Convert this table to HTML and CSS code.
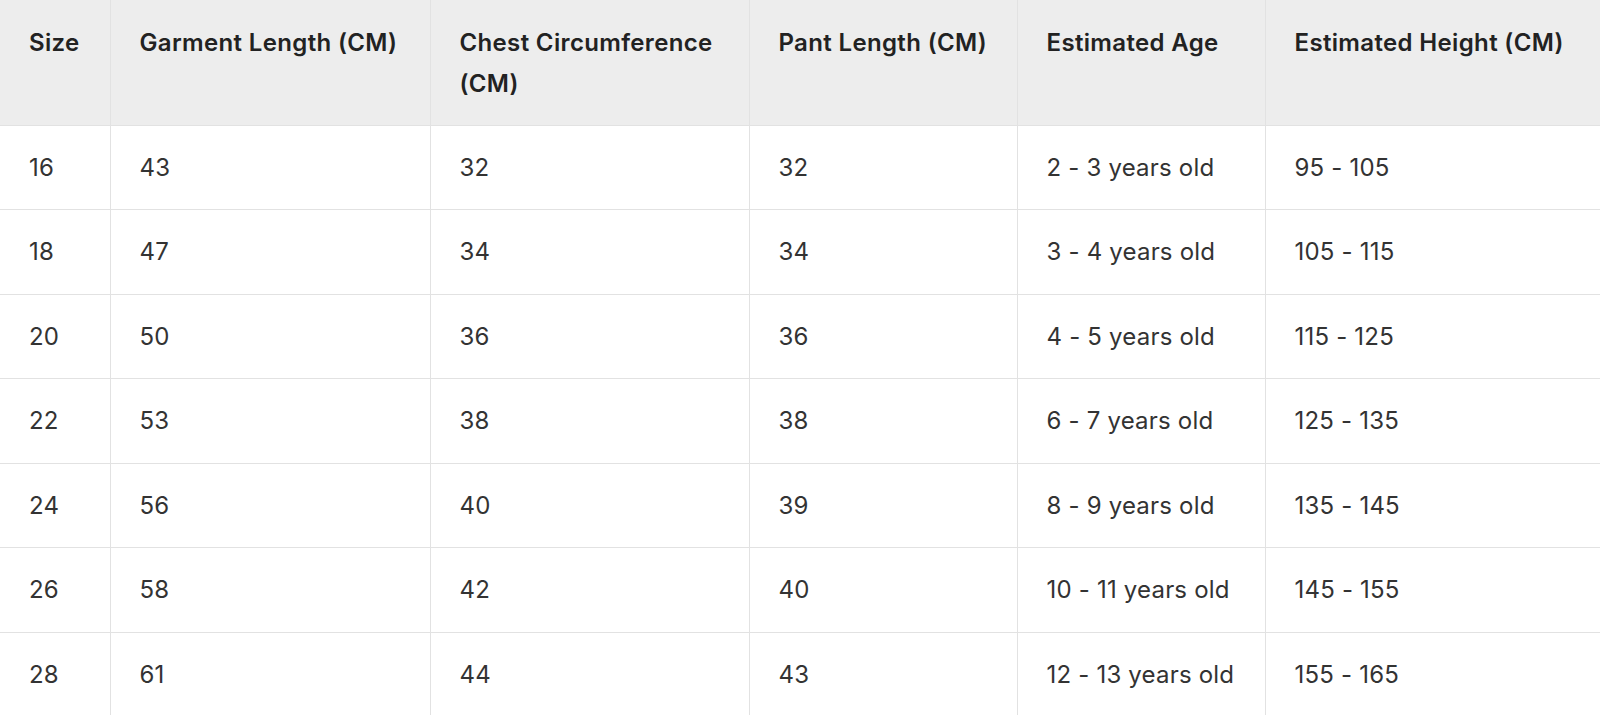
FILE: index.html
```html
<!DOCTYPE html>
<html lang="en">
<head>
<meta charset="utf-8">
<title>Size Chart</title>
<link rel="stylesheet" href="styles.css">
</head>
<body>
<table class="size-table">
  <colgroup>
    <col class="c1"><col class="c2"><col class="c3"><col class="c4"><col class="c5"><col class="c6">
  </colgroup>
  <thead>
    <tr>
      <th>Size</th>
      <th>Garment Length (CM)</th>
      <th>Chest Circumference (CM)</th>
      <th>Pant Length (CM)</th>
      <th>Estimated Age</th>
      <th>Estimated Height (CM)</th>
    </tr>
  </thead>
  <tbody>
    <tr><td>16</td><td>43</td><td>32</td><td>32</td><td>2 - 3 years old</td><td>95 - 105</td></tr>
    <tr><td>18</td><td>47</td><td>34</td><td>34</td><td>3 - 4 years old</td><td>105 - 115</td></tr>
    <tr><td>20</td><td>50</td><td>36</td><td>36</td><td>4 - 5 years old</td><td>115 - 125</td></tr>
    <tr><td>22</td><td>53</td><td>38</td><td>38</td><td>6 - 7 years old</td><td>125 - 135</td></tr>
    <tr><td>24</td><td>56</td><td>40</td><td>39</td><td>8 - 9 years old</td><td>135 - 145</td></tr>
    <tr><td>26</td><td>58</td><td>42</td><td>40</td><td>10 - 11 years old</td><td>145 - 155</td></tr>
    <tr><td>28</td><td>61</td><td>44</td><td>43</td><td>12 - 13 years old</td><td>155 - 165</td></tr>
  </tbody>
</table>
</body>
</html>
```

FILE: styles.css
```css
html, body {
  margin: 0;
  padding: 0;
  background: #ffffff;
}

body {
  font-family: Inter, "Noto Sans", "Liberation Sans", sans-serif;
  color: #2b2b2b;
  overflow: hidden;
}

.size-table {
  width: 1600px;
  border-collapse: collapse;
  table-layout: fixed;
}

.c1 { width: 110px; }
.c2 { width: 320px; }
.c3 { width: 319px; }
.c4 { width: 268px; }
.c5 { width: 248px; }
.c6 { width: 335px; }

.size-table th,
.size-table td {
  border-right: 1px solid #e2e2e2;
  border-bottom: 1px solid #e2e2e2;
  text-align: left;
  padding: 0 10px 0 29px;
  box-sizing: border-box;
}

.size-table th:last-child,
.size-table td:last-child {
  border-right: none;
}

.size-table th {
  background: #ededed;
  font-size: 24px;
  font-weight: 600;
  line-height: 41px;
  color: #222222;
  vertical-align: top;
  height: 125px;
  padding-top: 22px;
  letter-spacing: 0.35px;
}

.size-table td {
  font-size: 24px;
  font-weight: 400;
  color: #333333;
  height: 84.5px;
  vertical-align: middle;
  letter-spacing: 0.2px;
}
```
